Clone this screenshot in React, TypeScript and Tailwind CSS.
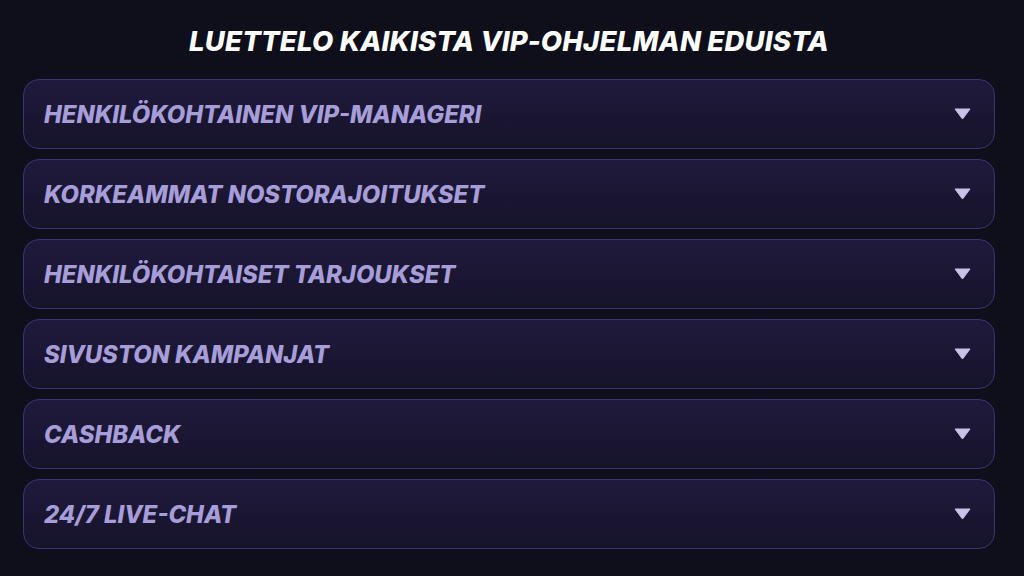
import React from 'react';

const items = [
  'HENKILÖKOHTAINEN VIP-MANAGERI',
  'KORKEAMMAT NOSTORAJOITUKSET',
  'HENKILÖKOHTAISET TARJOUKSET',
  'SIVUSTON KAMPANJAT',
  'CASHBACK',
  '24/7 LIVE-CHAT',
];

const Caret = () => (
  <svg width="17" height="12" viewBox="0 0 17 12" className="shrink-0">
    <path d="M1 1 H16 L8.5 11 Z" fill="#c9c1ea" stroke="#c9c1ea" strokeWidth="1" strokeLinejoin="round" />
  </svg>
);

export default function App() {
  return (
    <div className="w-[1024px] h-[576px] bg-[#0f0e1b] overflow-hidden" style={{ fontFamily: 'Inter, "Open Sans", sans-serif' }}>
      <div className="w-[1018px] flex flex-col items-center">
        <h1 className="mt-[24px] h-[36px] flex items-center text-white text-[27.5px] font-extrabold italic tracking-[0.2px]">
          LUETTELO KAIKISTA VIP-OHJELMAN EDUISTA
        </h1>
        <div className="mt-[19px] w-[972px] flex flex-col gap-[10px]">
          {items.map((t) => (
            <div
              key={t}
              className="h-[70px] rounded-[16px] border border-[#3b3372] bg-gradient-to-b from-[#1f1a3b] to-[#16132b] flex items-center justify-between pl-[20px] pr-[23px]"
            >
              <span className="pt-[2px] text-[#a79ed9] text-[23.8px] font-extrabold italic">{t}</span>
              <Caret />
            </div>
          ))}
        </div>
      </div>
    </div>
  );
}
